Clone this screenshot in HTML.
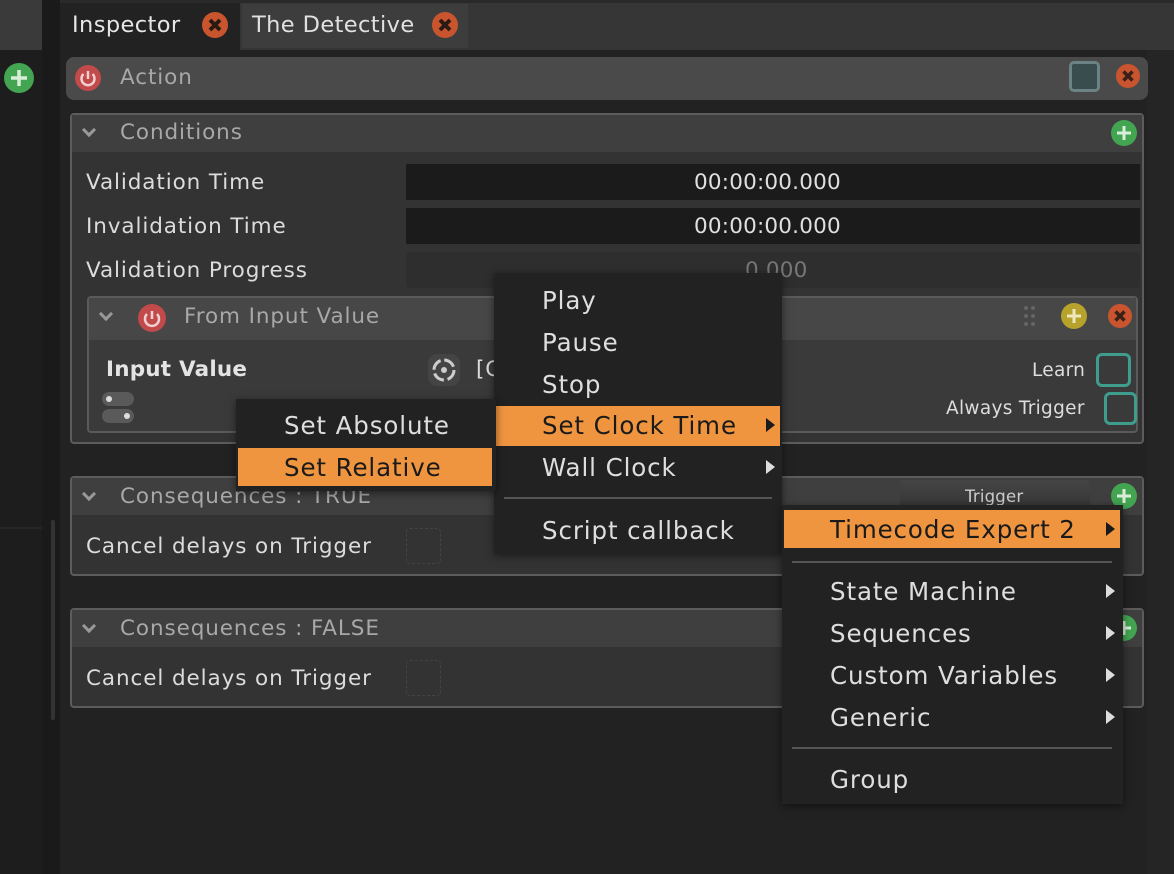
<!DOCTYPE html>
<html><head><meta charset="utf-8"><style>
*{margin:0;padding:0;box-sizing:border-box}
body{width:1174px;height:874px;background:#222;position:relative;overflow:hidden;font-family:"DejaVu Sans","Liberation Sans",sans-serif;color:#ddd;letter-spacing:0.9px}
.a{position:absolute}
.t{position:absolute;white-space:nowrap;margin-top:1px}
.lbl{font-size:21.5px;color:#dcdcdc}
.hdr{font-size:21.5px;color:#a8a8a8}
.box{position:absolute;border:2px solid #5c5c5c;background:#333;border-radius:4px}
.menu{position:absolute;background:#222;box-shadow:0 2px 8px rgba(0,0,0,.5)}
.mi{position:absolute;font-size:24.5px;color:#dedede;white-space:nowrap;margin-top:1px}
.hl{position:absolute;background:#f0953f}
.arr{position:absolute;width:0;height:0;border-top:7px solid transparent;border-bottom:7px solid transparent;border-left:9px solid #ddd}
.sep{position:absolute;height:2px;background:#555}
.chev{position:absolute;width:10px;height:10px;border-right:3px solid #999;border-bottom:3px solid #999;transform:rotate(45deg)}
</style></head><body>
<div class="a" style="left:0;top:0;width:42px;height:50px;background:#3a3a3a"></div>
<div class="a" style="left:0;top:50px;width:48px;height:824px;background:#1d1d1d"></div>
<div class="a" style="left:0;top:527px;width:48px;height:2px;background:#262626"></div>
<div class="a" style="left:42px;top:0;width:18px;height:874px;background:#1a1a1a"></div>
<div class="a" style="left:51px;top:520px;width:4px;height:200px;background:#333;border-radius:2px"></div>
<svg class="a" style="left:3px;top:62px" width="32" height="32"><circle cx="16" cy="16" r="15" fill="#43a552"/><path d="M16 8v16M8 16h16" stroke="#d8eed8" stroke-width="3.5"/></svg>
<div class="a" style="left:60px;top:0;width:1114px;height:50px;background:#363636"></div>
<div class="a" style="left:60px;top:0;width:1114px;height:3px;background:#2a2a2a"></div>
<div class="a" style="left:60px;top:3px;width:180px;height:47px;background:#222"></div>
<div class="a" style="left:242px;top:4px;width:226px;height:44px;background:#3d3d3d"></div>
<div class="t" style="left:72px;top:11px;font-size:22.5px;color:#e6e6e6;letter-spacing:0.4px">Inspector</div>
<div class="t" style="left:252px;top:11px;font-size:22.5px;color:#e0e0e0;letter-spacing:0.4px">The Detective</div>
<svg class="a" style="left:201px;top:11px" width="28" height="28"><circle cx="14" cy="14" r="13" fill="#c9552e"/><path d="M9 9l10 10M19 9l-10 10" stroke="#2a1a14" stroke-width="4"/></svg>
<svg class="a" style="left:431px;top:11px" width="28" height="28"><circle cx="14" cy="14" r="13" fill="#c9552e"/><path d="M9 9l10 10M19 9l-10 10" stroke="#2a1a14" stroke-width="4"/></svg>
<div class="a" style="left:1147px;top:50px;width:27px;height:824px;background:#252525"></div>
<div class="a" style="left:66px;top:57px;width:1082px;height:43px;background:#4a4a4a;border-radius:8px"></div>
<svg class="a" style="left:74px;top:64px" width="28" height="28"><circle cx="14" cy="14" r="13" fill="#c24a4a"/><path d="M9.5 10a6.5 6.5 0 1 0 9 0" fill="none" stroke="#f0d0d0" stroke-width="2.5"/><path d="M14 7v8" stroke="#f0d0d0" stroke-width="2.5"/></svg>
<div class="t hdr" style="left:120px;top:64px">Action</div>
<div class="a" style="left:1069px;top:61px;width:31px;height:31px;background:#394d4f;border:3px solid #6d8284;border-radius:5px"></div>
<svg class="a" style="left:1115px;top:63px" width="26" height="26"><circle cx="13" cy="13" r="12" fill="#c9552e"/><path d="M8.5 8.5l9 9M17.5 8.5l-9 9" stroke="#3a2018" stroke-width="3.5"/></svg>
<div class="box" style="left:70px;top:113px;width:1074px;height:331px"></div>
<div class="a" style="left:72px;top:115px;width:1070px;height:37px;background:#3f3f3f"></div>
<div class="chev" style="left:84px;top:125px"></div>
<div class="t hdr" style="left:120px;top:119px">Conditions</div>
<svg class="a" style="left:1110px;top:119px" width="28" height="28"><circle cx="14" cy="14" r="13" fill="#43a552"/><path d="M14 7v14M7 14h14" stroke="#d8eed8" stroke-width="3"/></svg>
<div class="t lbl" style="left:86px;top:169px">Validation Time</div>
<div class="a" style="left:406px;top:164px;width:734px;height:36px;background:#1b1b1b"></div>
<div class="t lbl" style="left:694px;top:169px;color:#e0e0e0;letter-spacing:0.2px">00:00:00.000</div>
<div class="t lbl" style="left:86px;top:213px">Invalidation Time</div>
<div class="a" style="left:406px;top:208px;width:734px;height:36px;background:#1b1b1b"></div>
<div class="t lbl" style="left:694px;top:213px;color:#e0e0e0;letter-spacing:0.2px">00:00:00.000</div>
<div class="t lbl" style="left:86px;top:257px">Validation Progress</div>
<div class="a" style="left:406px;top:252px;width:734px;height:36px;background:#2e2e2e;border-radius:4px"></div>
<div class="t lbl" style="left:745px;top:257px;color:#777;letter-spacing:0.2px">0.000</div>
<div class="a" style="left:87px;top:296px;width:1051px;height:137px;border:2px solid #5a5a5a;background:#3a3a3a;border-radius:4px"></div>
<div class="a" style="left:89px;top:298px;width:1047px;height:42px;background:#474747"></div>
<div class="chev" style="left:101px;top:309px"></div>
<svg class="a" style="left:137px;top:303px" width="30" height="30"><circle cx="15" cy="15" r="14" fill="#c24a4a"/><path d="M10 11a7 7 0 1 0 10 0" fill="none" stroke="#f0d0d0" stroke-width="2.5"/><path d="M15 8v8" stroke="#f0d0d0" stroke-width="2.5"/></svg>
<div class="t hdr" style="left:184px;top:303px">From Input Value</div>
<svg class="a" style="left:1022px;top:304px" width="16" height="26"><g fill="#666"><circle cx="4" cy="4" r="2"/><circle cx="11" cy="4" r="2"/><circle cx="4" cy="12" r="2"/><circle cx="11" cy="12" r="2"/><circle cx="4" cy="20" r="2"/><circle cx="11" cy="20" r="2"/></g></svg>
<svg class="a" style="left:1060px;top:302px" width="28" height="28"><circle cx="14" cy="14" r="13" fill="#b7a32c"/><path d="M14 7v14M7 14h14" stroke="#eee8c0" stroke-width="3"/></svg>
<svg class="a" style="left:1106px;top:302px" width="28" height="28"><circle cx="14" cy="14" r="12" fill="#c9552e"/><path d="M9.5 9.5l9 9M18.5 9.5l-9 9" stroke="#3a2018" stroke-width="3.5"/></svg>
<div class="t" style="left:106px;top:356px;font-size:21.5px;font-weight:bold;color:#e4e4e4;letter-spacing:0.2px">Input Value</div>
<div class="a" style="left:102px;top:392px;width:32px;height:14px;background:#5a5a5a;border-radius:7px"></div>
<div class="a" style="left:106px;top:396px;width:6px;height:6px;background:#ddd;border-radius:3px"></div>
<div class="a" style="left:102px;top:409px;width:32px;height:14px;background:#5a5a5a;border-radius:7px"></div>
<div class="a" style="left:124px;top:413px;width:6px;height:6px;background:#ddd;border-radius:3px"></div>
<div class="a" style="left:428px;top:354px;width:32px;height:32px;background:#444;border-radius:9px"></div>
<svg class="a" style="left:430px;top:356px" width="28" height="28"><circle cx="14" cy="14" r="10" fill="none" stroke="#ccc" stroke-width="3" stroke-dasharray="12 3.7"/><circle cx="14" cy="14" r="3" fill="#ccc"/></svg>
<div class="t lbl" style="left:476px;top:356px">[C</div>
<div class="t lbl" style="left:775px;top:356px">]</div>
<div class="t" style="left:1032px;top:359px;font-size:18.5px;color:#ddd;letter-spacing:0.3px">Learn</div>
<div class="a" style="left:1096px;top:353px;width:35px;height:34px;border:3px solid #3e9d8c;border-radius:6px"></div>
<div class="t" style="left:946px;top:397px;font-size:18.5px;color:#ddd;letter-spacing:0.3px">Always Trigger</div>
<div class="a" style="left:1104px;top:392px;width:33px;height:33px;border:3px solid #3e9d8c;border-radius:6px"></div>
<div class="box" style="left:70px;top:476px;width:1074px;height:100px"></div>
<div class="a" style="left:72px;top:478px;width:1070px;height:37px;background:#3f3f3f"></div>
<div class="chev" style="left:84px;top:489px"></div>
<div class="t hdr" style="left:120px;top:483px">Consequences : TRUE</div>
<div class="a" style="left:900px;top:480px;width:190px;height:32px;background:linear-gradient(#454545,#333);border-radius:4px"></div>
<div class="t" style="left:965px;top:486px;font-size:16.5px;color:#ccc;letter-spacing:0.2px">Trigger</div>
<svg class="a" style="left:1110px;top:482px" width="28" height="28"><circle cx="14" cy="14" r="13" fill="#43a552"/><path d="M14 7v14M7 14h14" stroke="#d8eed8" stroke-width="3"/></svg>
<div class="t lbl" style="left:86px;top:533px">Cancel delays on Trigger</div>
<div class="a" style="left:406px;top:528px;width:35px;height:36px;border:1px dashed #444;border-radius:4px"></div>
<div class="box" style="left:70px;top:608px;width:1074px;height:100px"></div>
<div class="a" style="left:72px;top:610px;width:1070px;height:37px;background:#3f3f3f"></div>
<div class="chev" style="left:84px;top:621px"></div>
<div class="t hdr" style="left:120px;top:615px">Consequences : FALSE</div>
<svg class="a" style="left:1110px;top:614px" width="28" height="28"><circle cx="14" cy="14" r="13" fill="#43a552"/><path d="M14 7v14M7 14h14" stroke="#d8eed8" stroke-width="3"/></svg>
<div class="t lbl" style="left:86px;top:665px">Cancel delays on Trigger</div>
<div class="a" style="left:406px;top:660px;width:35px;height:36px;border:1px dashed #444;border-radius:4px"></div>

<div class="menu" style="left:494px;top:273px;width:288px;height:281px"></div>
<div class="mi" style="left:542px;top:285px">Play</div>
<div class="mi" style="left:542px;top:327px">Pause</div>
<div class="mi" style="left:542px;top:369px">Stop</div>
<div class="hl" style="left:496px;top:406px;width:284px;height:40px"></div>
<div class="mi" style="left:542px;top:410px;color:#1a1a1a">Set Clock Time</div>
<div class="arr" style="left:766px;top:418px;border-left-color:#1a1a1a"></div>
<div class="mi" style="left:542px;top:452px">Wall Clock</div>
<div class="arr" style="left:766px;top:460px"></div>
<div class="sep" style="left:504px;top:497px;width:268px"></div>
<div class="mi" style="left:542px;top:515px">Script callback</div>
<div class="menu" style="left:236px;top:399px;width:260px;height:92px"></div>
<div class="mi" style="left:284px;top:410px">Set Absolute</div>
<div class="hl" style="left:238px;top:448px;width:254px;height:38px"></div>
<div class="mi" style="left:284px;top:452px;color:#1a1a1a">Set Relative</div>
<div class="menu" style="left:782px;top:505px;width:341px;height:299px"></div>
<div class="hl" style="left:784px;top:510px;width:336px;height:38px"></div>
<div class="mi" style="left:830px;top:514px;color:#1a1a1a">Timecode Expert 2</div>
<div class="arr" style="left:1106px;top:522px;border-left-color:#1a1a1a"></div>
<div class="sep" style="left:792px;top:561px;width:320px"></div>
<div class="mi" style="left:830px;top:576px">State Machine</div>
<div class="arr" style="left:1106px;top:584px"></div>
<div class="mi" style="left:830px;top:618px">Sequences</div>
<div class="arr" style="left:1106px;top:626px"></div>
<div class="mi" style="left:830px;top:660px">Custom Variables</div>
<div class="arr" style="left:1106px;top:668px"></div>
<div class="mi" style="left:830px;top:702px">Generic</div>
<div class="arr" style="left:1106px;top:710px"></div>
<div class="sep" style="left:792px;top:747px;width:320px"></div>
<div class="mi" style="left:830px;top:764px">Group</div>
</body></html>
